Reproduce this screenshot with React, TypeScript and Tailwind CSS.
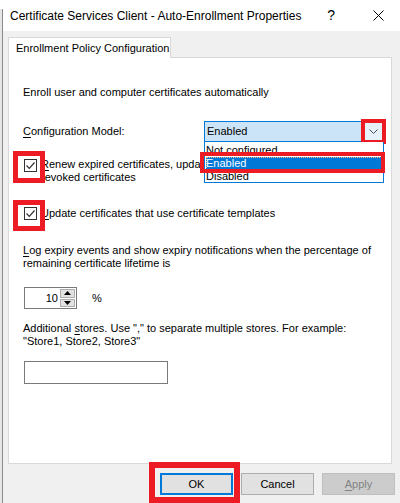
import React from 'react';

const FONT = "font-['Liberation_Sans',Arial,sans-serif]";

// underlined access-key letter
const Key: React.FC<{ children: React.ReactNode }> = ({ children }) => (
  <span className="underline underline-offset-2">{children}</span>
);

const RedBox: React.FC<{ className: string }> = ({ className }) => (
  <div className={`pointer-events-none absolute border-[#ed1c24] ${className}`} />
);

const CheckBox: React.FC = () => (
  <div className="flex h-[13px] w-[13px] items-center justify-center border border-[#333333] bg-white">
    <svg width="11" height="11" viewBox="0 0 11 11">
      <path d="M1.5 5.5 L4.3 8.3 L9.5 2.5" fill="none" stroke="#333333" strokeWidth="1.2" />
    </svg>
  </div>
);

const Button: React.FC<{ label: React.ReactNode; primary?: boolean; disabled?: boolean }> = ({ label, primary, disabled }) => (
  <div
    className={`flex h-[22px] w-[73px] items-center justify-center ${
      primary
        ? 'border-2 border-[#0078d7] bg-[#e1e1e1] text-black'
        : disabled
        ? 'border border-[#bfbfbf] bg-[#cccccc] text-[#838383]'
        : 'border border-[#adadad] bg-[#e1e1e1] text-black'
    }`}
  >
    {label}
  </div>
);

const ConfigModelSelect: React.FC = () => (
  <div className="relative h-[21px] w-[180px]">
    <div className="flex h-full items-center border border-[#0078d7] bg-[#cce4f7] pl-[2px]">
      <span className="flex-1">Enabled</span>
      <div className="mr-[1px] flex h-[17px] w-[18px] items-center justify-center bg-[#e5f1fb]">
        <svg width="9" height="5" viewBox="0 0 9 5">
          <path d="M0.5 0.5 L4.5 4.5 L8.5 0.5" fill="none" stroke="#505050" strokeWidth="1" />
        </svg>
      </div>
    </div>
    <RedBox className="-right-[2px] -top-[2px] h-[25px] w-[25px] border-[4px]" />

    {/* open drop-down list */}
    <div className="absolute left-0 top-full z-10 h-[41px] w-[180px] overflow-hidden border border-t-0 border-[#0078d7] bg-white pt-[2px] leading-[13px]">
      <div className="h-[13px] whitespace-nowrap pl-[1px]">Not configured</div>
      <div className="mx-[1px] h-[13px] bg-[#0078d7] text-white outline outline-1 -outline-offset-1 outline-dotted outline-[#f3c08e]">
        Enabled
      </div>
      <div className="h-[12px] pl-[1px]">Disabled</div>
    </div>
    <RedBox className="-left-[4px] top-[31px] z-20 h-[21px] w-[185px] border-[4px]" />
  </div>
);

export default function App() {
  return (
    <div className={`relative h-[503px] w-[400px] overflow-hidden bg-[#f0f0f0] text-[11px] text-black ${FONT}`}>
      <div className="flex h-full">
        {/* edge of the window behind */}
        <div className="flex w-[3px] flex-col">
          <div className="h-[9px] bg-white" />
          <div className="flex-1 border-r border-[#8a8a8a] bg-[#e6e6e6]" />
        </div>

        <div className="flex flex-1 flex-col">
          {/* title bar */}
          <div className="flex h-[31px] items-center bg-white pl-[7px]">
            <span className="flex-1 whitespace-nowrap text-[12px]">Certificate Services Client - Auto-Enrollment Properties</span>
            <span className="mr-[38px] text-[14px]">?</span>
            <svg width="11" height="11" viewBox="0 0 11 11" className="mr-[16px]">
              <path d="M0.5 0.5 L10.5 10.5 M10.5 0.5 L0.5 10.5" stroke="#000" strokeWidth="1" />
            </svg>
          </div>

          {/* tab strip */}
          <div className="ml-[5px] mt-[6px] flex">
            <div className="relative z-10 flex h-[21px] w-[163px] shrink-0 items-center whitespace-nowrap border border-b-0 border-[#d9d9d9] bg-white pl-[7px]">
              Enrollment Policy Configuration
            </div>
          </div>

          {/* tab page */}
          <div className="relative -mt-[1px] ml-[5px] h-[407px] w-[384px] whitespace-nowrap border border-[#d9d9d9] bg-white pl-[14px]">
            <div className="mt-[28px] leading-[13px]">Enroll user and computer certificates automatically</div>

            <div className="mt-[22px] flex h-[21px] items-center">
              <span className="w-[181px]">
                <Key>C</Key>onfiguration Model:
              </span>
              <ConfigModelSelect />
            </div>

            <div className="mt-[16px] flex leading-[13px]">
              <div className="relative ml-[1px] mt-[1px]">
                <CheckBox />
                <RedBox className="-left-[11px] -top-[8px] h-[32px] w-[32px] border-[5px]" />
              </div>
              <div className="ml-[4px] w-[163px] overflow-hidden">
                <Key>R</Key>enew expired certificates, update pending certificates, and remove
                <br />
                revoked certificates
              </div>
            </div>

            <div className="mt-[23px] flex leading-[13px]">
              <div className="relative ml-[1px]">
                <CheckBox />
                <RedBox className="-left-[11px] -top-[7px] h-[31px] w-[32px] border-[5px]" />
              </div>
              <div className="ml-[4px]">
                <Key>U</Key>pdate certificates that use certificate templates
              </div>
            </div>

            <div className="mt-[24px] leading-[13px]">
              <Key>L</Key>og expiry events and show expiry notifications when the percentage of
              <br />
              remaining certificate lifetime is
            </div>

            <div className="mt-[17px] flex h-[22px] items-center">
              <div className="ml-[1px] flex h-full w-[53px] border border-[#7a7a7a] bg-white">
                <span className="flex w-[33px] items-center justify-end">10</span>
                <div className="ml-auto flex w-[17px] flex-col gap-[1px] p-[1px]">
                  <div className="flex flex-1 items-center justify-center border border-[#adadad] bg-[#e1e1e1]">
                    <svg width="7" height="4" viewBox="0 0 7 4"><path d="M0 4 L3.5 0 L7 4 Z" fill="#000" /></svg>
                  </div>
                  <div className="flex flex-1 items-center justify-center border border-[#adadad] bg-[#e1e1e1]">
                    <svg width="7" height="4" viewBox="0 0 7 4"><path d="M0 0 L3.5 4 L7 0 Z" fill="#000" /></svg>
                  </div>
                </div>
              </div>
              <span className="ml-[15px]">%</span>
            </div>

            <div className="mt-[13px] leading-[13px]">
              Additional <Key>s</Key>tores. Use "," to separate multiple stores. For example:
              <br />
              "Store1, Store2, Store3"
            </div>

            <div className="ml-[1px] mt-[13px] h-[23px] w-[144px] border border-[#7a7a7a] bg-white" />
          </div>

          {/* dialog buttons */}
          <div className="mt-[9px] flex justify-end gap-[8px] pr-[5px]">
            <div className="relative">
              <Button label="OK" primary />
              <RedBox className="-left-[11px] -top-[11px] h-[41px] w-[91px] border-[6px]" />
            </div>
            <Button label="Cancel" />
            <Button label={<><Key>A</Key>pply</>} disabled />
          </div>
        </div>
      </div>
    </div>
  );
}
